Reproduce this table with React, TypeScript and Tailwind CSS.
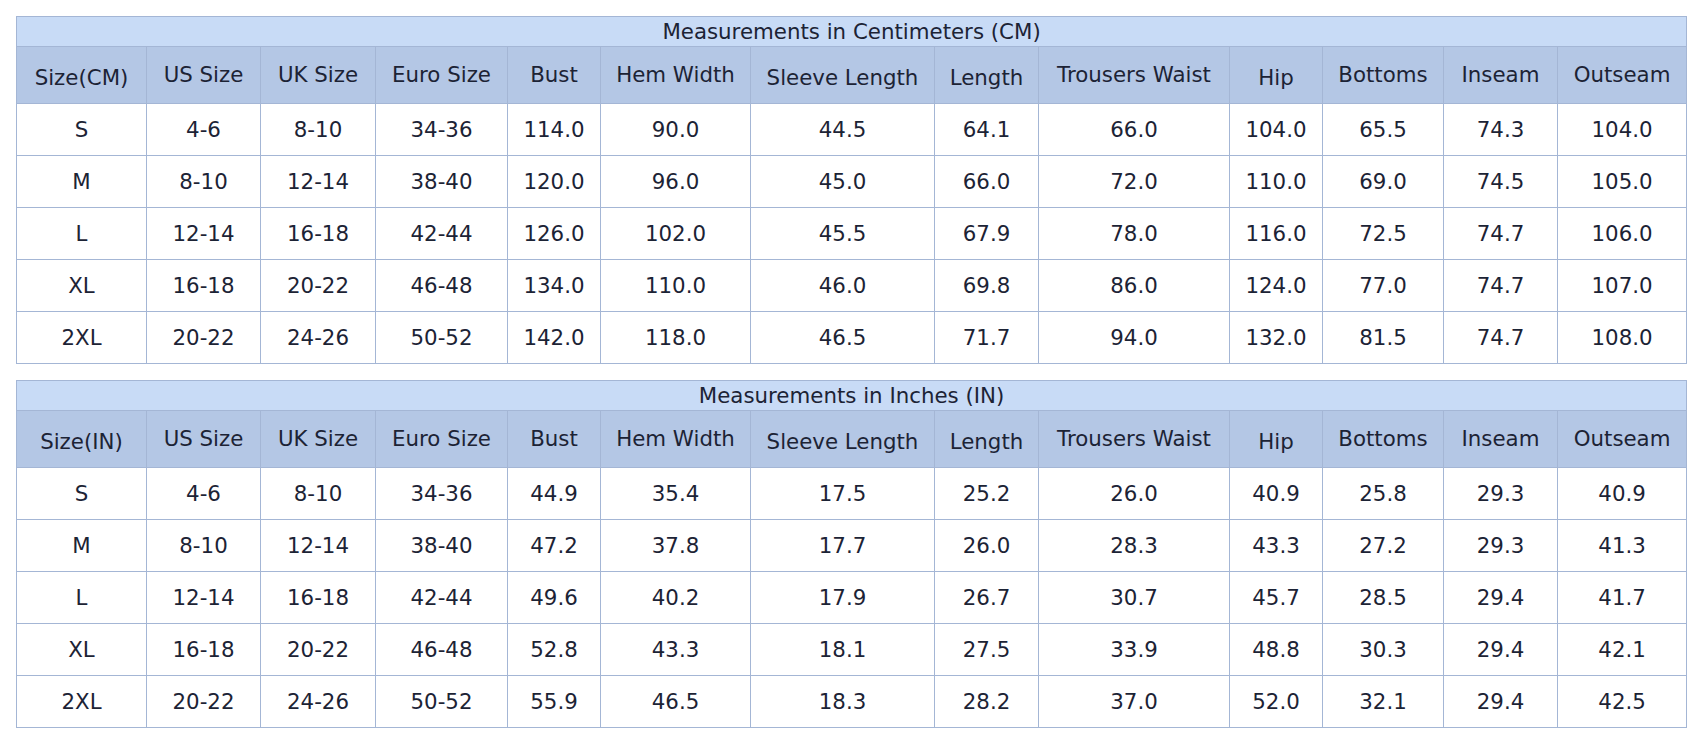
import React from 'react';

type Row = string[];

const colWidths = [
  'w-[130px]', 'w-[114px]', 'w-[115px]', 'w-[132px]', 'w-[93px]', 'w-[150px]', 'w-[184px]',
  'w-[104px]', 'w-[191px]', 'w-[93px]', 'w-[121px]', 'w-[114px]', 'w-[129px]',
];

// true = label sits a little lower in its header cell
const headers: [string, boolean][] = [
  ['US Size', false], ['UK Size', false], ['Euro Size', false], ['Bust', false],
  ['Hem Width', false], ['Sleeve Length', true], ['Length', true], ['Trousers Waist', false],
  ['Hip', true], ['Bottoms', false], ['Inseam', false], ['Outseam', false],
];

const sizes = [
  ['S', '4-6', '8-10', '34-36'],
  ['M', '8-10', '12-14', '38-40'],
  ['L', '12-14', '16-18', '42-44'],
  ['XL', '16-18', '20-22', '46-48'],
  ['2XL', '20-22', '24-26', '50-52'],
];

const cmValues: Row[] = [
  ['114.0', '90.0', '44.5', '64.1', '66.0', '104.0', '65.5', '74.3', '104.0'],
  ['120.0', '96.0', '45.0', '66.0', '72.0', '110.0', '69.0', '74.5', '105.0'],
  ['126.0', '102.0', '45.5', '67.9', '78.0', '116.0', '72.5', '74.7', '106.0'],
  ['134.0', '110.0', '46.0', '69.8', '86.0', '124.0', '77.0', '74.7', '107.0'],
  ['142.0', '118.0', '46.5', '71.7', '94.0', '132.0', '81.5', '74.7', '108.0'],
];

const inValues: Row[] = [
  ['44.9', '35.4', '17.5', '25.2', '26.0', '40.9', '25.8', '29.3', '40.9'],
  ['47.2', '37.8', '17.7', '26.0', '28.3', '43.3', '27.2', '29.3', '41.3'],
  ['49.6', '40.2', '17.9', '26.7', '30.7', '45.7', '28.5', '29.4', '41.7'],
  ['52.8', '43.3', '18.1', '27.5', '33.9', '48.8', '30.3', '29.4', '42.1'],
  ['55.9', '46.5', '18.3', '28.2', '37.0', '52.0', '32.1', '29.4', '42.5'],
];

const SizeTable = ({ title, unit, values }: { title: string; unit: string; values: Row[] }) => (
  <table className="w-[1671px] table-fixed border-collapse text-center text-[16pt] text-[#1c2335]">
    <colgroup>
      {colWidths.map((w, i) => <col key={i} className={w} />)}
    </colgroup>
    <tbody>
      <tr className="h-[30px] bg-[#c8dbf6]">
        <td colSpan={13} className="border border-[#a4b6d5] p-0 leading-[24px]">{title}</td>
      </tr>
      <tr className="h-[57px] bg-[#b4c7e5]">
        <td className="border border-[#a4b6d5] px-1 pt-[6px] pb-0 leading-[26px]">Size({unit})</td>
        {headers.map(([h, low]) => (
          <td key={h} className={`border border-[#a4b6d5] px-1 leading-[26px] ${low ? 'pt-[6px] pb-0' : 'pt-0 pb-[1px]'}`}>
            {h}
          </td>
        ))}
      </tr>
      {sizes.map((s, i) => (
        <tr key={s[0]} className="h-[52px] bg-white">
          {[...s, ...values[i]].map((v, j) => (
            <td key={j} className="border border-[#a4b6d5] p-0 leading-[26px]">{v}</td>
          ))}
        </tr>
      ))}
    </tbody>
  </table>
);

const App: React.FC = () => {
  return (
    <div className="min-h-screen bg-white p-4 font-['DejaVu_Sans',sans-serif]">
      <div className="flex flex-col gap-4">
        <SizeTable title="Measurements in Centimeters (CM)" unit="CM" values={cmValues} />
        <SizeTable title="Measurements in Inches (IN)" unit="IN" values={inValues} />
      </div>
    </div>
  );
};

export default App;
